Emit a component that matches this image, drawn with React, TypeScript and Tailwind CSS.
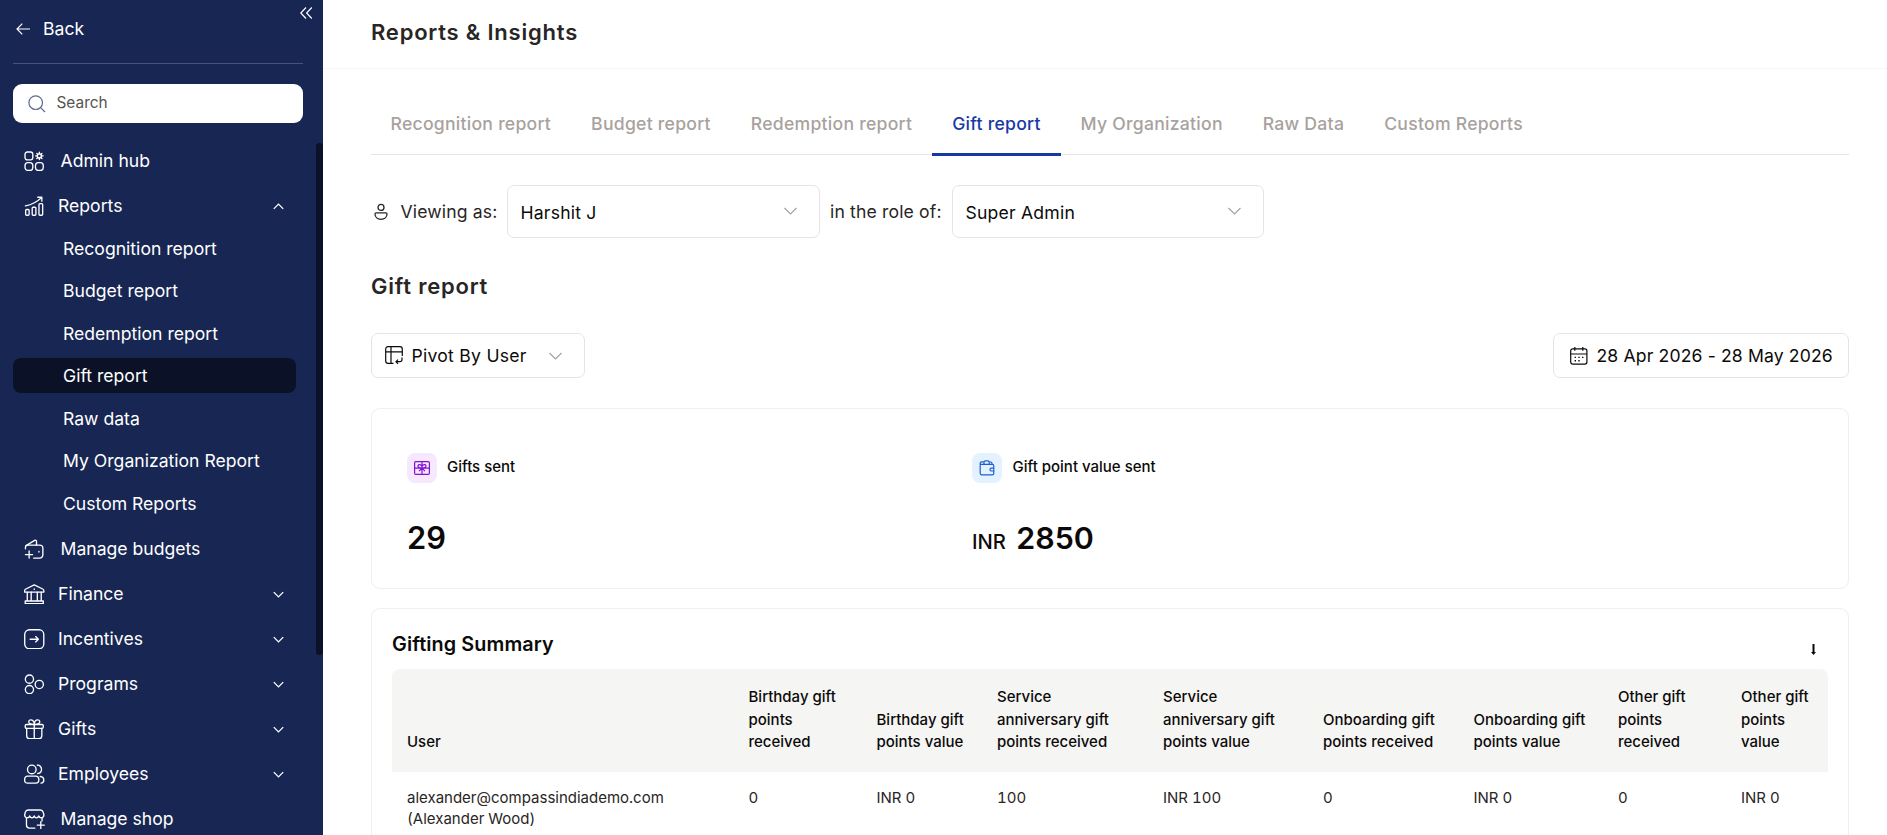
import type { ReactNode } from 'react'

type IconName =
  | 'hub'
  | 'reports'
  | 'budgets'
  | 'finance'
  | 'incentives'
  | 'programs'
  | 'gifts'
  | 'employees'
  | 'shop'

const ICONS: Record<IconName, ReactNode> = {
  hub: (
    <>
      <rect x="1" y="1" width="7.6" height="7.6" rx="2.2" />
      <rect x="1" y="11.4" width="7.6" height="7.6" rx="2.8" />
      <rect x="11.2" y="11.4" width="7.6" height="7.6" rx="2.8" />
      <circle cx="15" cy="4.8" r="2" />
      <path d="M15 1.2v1.6M15 6.8v1.6M11.4 4.8H13M17 4.8h1.6M12.5 2.3l1.1 1.1M16.4 6.2l1.1 1.1M17.5 2.3l-1.1 1.1M13.6 6.2l-1.1 1.1" />
    </>
  ),
  reports: (
    <>
      <rect x="1.6" y="13.2" width="3.4" height="5.6" rx="1" />
      <rect x="8" y="11" width="3.6" height="7.8" rx="1" />
      <rect x="14.6" y="7.4" width="3.6" height="11.4" rx="1" />
      <path d="M1.4 9.6C7 8.6 12.6 6 17 1.6M13.4 1.2H17.4V5" />
    </>
  ),
  budgets: (
    <>
      <path d="M1.4 9.6V8.2c0-1.5.9-2.2 2.2-2.2h11.6c2 0 3.2 1 3.2 3v6.2c0 2.2-1.2 3.4-3.2 3.4H9.4" />
      <path d="M2 6.4 10.4 1.4c1-.5 1.8 0 1.8.9V6" />
      <path d="M5 11.6v7M1.4 15.2h7M14.6 12.2v.6" />
    </>
  ),
  finance: (
    <>
      <path d="M10 .9 18.2 4.9c1 .5 1.2 1 1.2 2v1H.6v-1c0-1 .2-1.5 1.2-2Z" />
      <path d="M3.2 8v8.5M7 8v8.5M13 8v8.5M16.8 8v8.5M1.2 16.6h17.6v2.6H1.2ZM10 4.8v.5" />
    </>
  ),
  incentives: (
    <>
      <rect x=".7" y=".7" width="18.6" height="18.6" rx="4.6" />
      <path d="M6 10h8M11.4 7.4 14 10l-2.6 2.6" />
    </>
  ),
  programs: (
    <>
      <circle cx="5.3" cy="5" r="4" />
      <circle cx="5.3" cy="15.2" r="4" />
      <circle cx="14.9" cy="10.2" r="4" />
    </>
  ),
  gifts: (
    <>
      <rect x="1.2" y="5.4" width="17.6" height="3.7" rx="1.2" />
      <path d="M2.6 9.1v7.1c0 2 1 3.1 3 3.1h8.8c2 0 3-1.1 3-3.1V9.1M10 5.4v13.9" />
      <path d="M10 5.4C7.8 5.4 4.6 4.8 4.6 2.7 4.6 1.4 5.8.7 7 .9 9 1.3 10 3.2 10 5.4ZM10 5.4c2.2 0 5.4-.6 5.4-2.7C15.4 1.4 14.2.7 13 .9 11 1.3 10 3.2 10 5.4Z" />
    </>
  ),
  employees: (
    <>
      <circle cx="7.6" cy="5.3" r="4.2" />
      <path d="M3.6 11.8h7.6c2 0 3.3 1.6 3.3 3.6 0 2.2-1 3.3-3 3.3H3.5c-1.9 0-2.9-1-2.9-3 0-2.2 1.2-3.9 3-3.9Z" />
      <path d="M13 1.2c2.2-.3 4.1 1.6 4.1 3.9s-1.6 4-3.7 4.2M15.8 12.2c2.2.2 3.5 1.6 3.5 3.5 0 1.8-1 3-2.7 3" />
    </>
  ),
  shop: (
    <>
      <path d="M2.4 9.2v6.5c0 2 1 3 3 3h5.2M17.6 9.2v2.4M16.4 12.4v6.8M13 15.8h6.8" />
      <path d="M4 1h12c1.7 0 2.3.7 2.7 2l.6 2.4c.3 1.8-.9 3.2-2.5 3.2-1.2 0-2-.7-2.4-1.8-.4 1.1-1.2 1.8-2.3 1.8-1 0-1.8-.7-2.1-1.8-.4 1.1-1.2 1.8-2.2 1.8-1.1 0-1.9-.7-2.2-1.8-.4 1.1-1.3 1.8-2.4 1.8C1.6 8.6.4 7.2.7 5.4L1.3 3c.4-1.3 1-2 2.7-2Z" />
    </>
  ),
}

const REPORT_LINKS = [
  'Recognition report',
  'Budget report',
  'Redemption report',
  'Gift report',
  'Raw data',
  'My Organization Report',
  'Custom Reports',
]

const MENU: { label: string; icon: IconName; expandable: boolean }[] = [
  { label: 'Manage budgets', icon: 'budgets', expandable: false },
  { label: 'Finance', icon: 'finance', expandable: true },
  { label: 'Incentives', icon: 'incentives', expandable: true },
  { label: 'Programs', icon: 'programs', expandable: true },
  { label: 'Gifts', icon: 'gifts', expandable: true },
  { label: 'Employees', icon: 'employees', expandable: true },
  { label: 'Manage shop', icon: 'shop', expandable: false },
]

const TABS = [
  'Recognition report',
  'Budget report',
  'Redemption report',
  'Gift report',
  'My Organization',
  'Raw Data',
  'Custom Reports',
]

const COLUMNS: { lines: string[]; value: string; width: string }[] = [
  { lines: ['Birthday gift', 'points', 'received'], value: '0', width: 'w-[128px]' },
  { lines: ['Birthday gift', 'points value'], value: 'INR 0', width: 'w-[120.5px]' },
  { lines: ['Service', 'anniversary gift', 'points received'], value: '100', width: 'w-[166px]' },
  { lines: ['Service', 'anniversary gift', 'points value'], value: 'INR 100', width: 'w-[160px]' },
  { lines: ['Onboarding gift', 'points received'], value: '0', width: 'w-[150.5px]' },
  { lines: ['Onboarding gift', 'points value'], value: 'INR 0', width: 'w-[144.5px]' },
  { lines: ['Other gift', 'points', 'received'], value: '0', width: 'w-[123px]' },
  { lines: ['Other gift', 'points', 'value'], value: 'INR 0', width: 'w-[102px]' },
]

function Chevron({ up, className }: { up?: boolean; className?: string }) {
  return (
    <svg viewBox="0 0 14 8" fill="none" stroke="currentColor" className={className}>
      <path d={up ? 'M1 7l6-6 6 6' : 'M1 1l6 6 6-6'} />
    </svg>
  )
}

function MenuRow({ label, icon, expandable, open }: { label: string; icon: IconName; expandable?: boolean; open?: boolean }) {
  return (
    <div className="flex h-[45px] shrink-0 items-center pl-6 pr-[39px]">
      <svg viewBox="0 0 20 20" fill="none" stroke="currentColor" strokeWidth="1.3" strokeLinecap="round" strokeLinejoin="round" className="mb-px size-[20.5px]">
        {ICONS[icon]}
      </svg>
      <span className={expandable ? 'ml-[13.5px] flex-1' : 'ml-4 flex-1'}>{label}</span>
      {expandable && <Chevron up={open} className="mb-px h-[7px] w-[11px] stroke-[1.7]" />}
    </div>
  )
}

function Sidebar() {
  return (
    <aside className="relative flex w-[323px] shrink-0 flex-col overflow-hidden bg-[#182653] text-[17.6px] text-white">
      <svg viewBox="0 0 12 12" fill="none" stroke="currentColor" strokeWidth="1.2" className="absolute left-[300px] top-[7px] size-3">
        <path d="M6 .5.8 6 6 11.5M11.8.5 6.6 6l5.2 5.5" />
      </svg>
      <div className="ml-[13px] flex h-[64px] w-[290px] shrink-0 items-start border-b border-[#475277] pl-[3px] pt-[15px]">
        <svg viewBox="0 0 14 12" fill="none" stroke="currentColor" strokeWidth="1.2" className="mt-2 h-3 w-[14px]">
          <path d="M6.3.7 1 6l5.3 5.3M1 6h13" />
        </svg>
        <span className="ml-[13px] leading-7">Back</span>
      </div>
      <div className="ml-[13px] mt-5 flex h-[39px] w-[290px] shrink-0 items-center rounded-[9px] bg-white pl-[15px]">
        <svg viewBox="0 0 18 18" fill="none" stroke="#5d6a92" strokeWidth="1.2" className="size-[18px]">
          <circle cx="7.7" cy="7.7" r="6.8" />
          <path d="m12.6 12.6 4.4 4.4" />
        </svg>
        <span className="mb-px ml-[10.5px] text-[15.4px] text-[#57534e]">Search</span>
      </div>
      <nav className="mt-4 flex flex-col">
        <MenuRow label="Admin hub" icon="hub" />
        <MenuRow label="Reports" icon="reports" expandable open />
        <div className="flex flex-col gap-[7.5px] pb-[6.5px] pl-[13px] pt-[1.5px]">
          {REPORT_LINKS.map((label) => (
            <a
              key={label}
              className={
                label === 'Gift report'
                  ? 'flex h-[35px] w-[283px] items-center rounded-lg bg-[#0b1228] pl-[50px] pt-[1.5px]'
                  : 'flex h-[35px] w-[283px] items-center pl-[50px] pt-[1.5px]'
              }
            >
              {label}
            </a>
          ))}
        </div>
        {MENU.map((item) => (
          <MenuRow key={item.label} {...item} />
        ))}
      </nav>
      {/* Scrollbar thumb */}
      <div className="absolute right-0 top-[143px] h-[512px] w-[7px] rounded bg-[#0b1228]" />
    </aside>
  )
}

function SelectBox({ value, width }: { value: string; width: string }) {
  return (
    <div className={`${width} flex h-[53px] items-center justify-between rounded-[7px] border border-[#e7e5e4] pl-[12.5px] pr-[21.5px] text-[#0c0a09]`}>
      <span className="pt-[3px] tracking-[0.2px]">{value}</span>
      <Chevron className="mb-[2px] h-2 w-[15px] text-[#a8a29e] stroke-[1.2]" />
    </div>
  )
}

function ViewingAs() {
  return (
    <div className="mt-[30px] flex h-[53px] items-center text-[17.6px] text-[#292524]">
      <svg viewBox="0 0 14 18" fill="none" stroke="currentColor" strokeWidth="1.3" className="ml-[3px] h-[18px] w-[14px]">
        <circle cx="7" cy="4.4" r="3" />
        <path d="M2.2 9.8h9.6c.8 0 1.2.5 1.2 1.2 0 3-2.4 5.3-6 5.3s-6-2.3-6-5.3c0-.7.4-1.2 1.2-1.2Z" />
      </svg>
      <span className="ml-[12.5px] w-[106.5px] pt-px tracking-[0.15px]">Viewing as:</span>
      <SelectBox value="Harshit J" width="w-[313px]" />
      <span className="ml-[10px] w-[122px] pt-px tracking-[0.15px]">in the role of:</span>
      <SelectBox value="Super Admin" width="w-[312px]" />
    </div>
  )
}

function StatCards() {
  return (
    <section className="mt-[30px] flex h-[181px] rounded-[9px] border border-[#f0efee] pl-[35px] pt-[44px] text-[#0c0a09]">
      <div className="w-[565px]">
        <div className="flex items-center">
          <div className="flex size-[30px] items-center justify-center rounded-lg bg-[#f5e8ff]">
            <svg viewBox="0 0 16 14" fill="none" stroke="#8312d2" strokeWidth="1.2" className="h-[14px] w-4">
              <rect x=".6" y=".6" width="14.8" height="12.8" rx="1.2" />
              <path d="M.6 7.2h14.8M8 .6v12.8M8 7.2C6 7.2 4 6.5 4 4.9 4 3 7.6 3.2 8 5.6 8.4 3.2 12 3 12 4.9c0 1.6-2 2.3-4 2.3ZM8 7.2 5 10.2M8 7.2l3 3" />
            </svg>
          </div>
          <span className="mb-[2px] ml-[10px] text-[15px] font-medium">Gifts sent</span>
        </div>
        <div className="mt-[34px] text-[30.8px] font-semibold leading-[42px]">29</div>
      </div>
      <div>
        <div className="flex items-center">
          <div className="flex size-[30px] items-center justify-center rounded-lg bg-[#e4f2ff]">
            <svg viewBox="0 0 16 16" fill="none" stroke="#1d5fd0" strokeWidth="1.2" className="size-4">
              <path d="M1.2 4.4v8.8c0 1 .6 1.6 1.6 1.6h10.4c1 0 1.6-.6 1.6-1.6V6c0-1-.6-1.6-1.6-1.6ZM1.2 4.4V3c0-.8.6-1.2 1.4-1.2h2.2M14.8 8.2h-2.6c-.8 0-1.2.6-1.2 1.4s.4 1.4 1.2 1.4h2.6" />
              <path d="M5 4.4V2.2C5 1.4 5.6.8 6.4.8h2.4c.8 0 1.4.6 1.4 1.4v2.2M10.6 2h1.2c.8 0 1.2.6 1.2 1.4v1" />
            </svg>
          </div>
          <span className="mb-[2px] ml-[10.5px] text-[15px] font-medium">Gift point value sent</span>
        </div>
        <div className="mt-[34px] flex items-baseline gap-[10.5px] text-[30.4px] font-semibold leading-[42px]">
          <span className="text-[20.2px] font-medium">INR</span>
          <span>2850</span>
        </div>
      </div>
    </section>
  )
}

function SummaryTable() {
  return (
    <section className="mt-[19px] h-[260px] shrink-0 rounded-[9px] border border-[#f0efee] px-5">
      <div className="flex h-[60px] items-start justify-between pr-[12px] text-[#0c0a09]">
        <h3 className="pt-5 text-[19.8px] font-semibold leading-[30px] tracking-[0.1px]">Gifting Summary</h3>
        <svg viewBox="0 0 5 11" className="mt-[35px] h-[11px] w-[5px]" fill="currentColor">
          <path d="M1.5 0h2v8H5L2.5 11 0 8h1.5Z" />
        </svg>
      </div>
      <table className="w-[1436px] table-fixed border-separate border-spacing-0 text-left text-[15px] tabular-nums">
        <thead>
          <tr className="h-[103px] align-bottom leading-[22.4px] text-[#0c0a09]">
            <th className="w-[341.5px] rounded-tl-lg bg-[#f5f5f4] pb-[18.6px] pl-[15px] font-medium">User</th>
            {COLUMNS.map((col, i) => (
              <th key={i} className={`${col.width} bg-[#f5f5f4] pb-[18.6px] pl-[15px] font-medium whitespace-nowrap last:rounded-tr-lg`}>
                {col.lines.map((line) => (
                  <div key={line}>{line}</div>
                ))}
              </th>
            ))}
          </tr>
        </thead>
        <tbody>
          <tr className="align-top leading-[21px] text-[#292524]">
            <td className="pl-[15px] pt-[15px]">
              alexander@compassindiademo.com
              <br />
              (Alexander Wood)
            </td>
            {COLUMNS.map((col, i) => (
              <td key={i} className="pl-[15px] pt-[15px]">{col.value}</td>
            ))}
          </tr>
        </tbody>
      </table>
    </section>
  )
}

export default function App() {
  return (
    <div className="flex h-[835px] w-[1887px] overflow-hidden bg-white font-['Inter',sans-serif]">
      <Sidebar />
      <main className="flex-1">
        <header className="h-[69px] border-b border-[#f5f5f4] pl-12 pt-[17px]">
          <h1 className="text-[22px] font-semibold leading-[30px] tracking-[0.78px] text-[#292524]">Reports &amp; Insights</h1>
        </header>
        <div className="flex flex-col pl-12 pr-[38px]">
          <div className="mt-[26px] flex h-[60px] border-b border-[#e7e5e4]">
            {TABS.map((tab) => (
              <div
                key={tab}
                className={
                  tab === 'Gift report'
                    ? '-ml-px h-[61px] border-b-3 border-[#1739a6] pl-[20.5px] pr-[20.3px] pt-[15px] text-[17.6px] font-medium leading-[27px] tracking-[0.26px] text-[#1739a6]'
                    : 'h-[61px] pl-[19.5px] pr-[20.5px] pt-[15px] text-[17.6px] font-medium leading-[27px] tracking-[0.26px] text-[#a8a29e]'
                }
              >
                {tab}
              </div>
            ))}
          </div>
          <ViewingAs />
          <h2 className="mt-[33px] text-[22px] font-semibold leading-[30px] tracking-[0.78px] text-[#292524]">Gift report</h2>
          <div className="mt-[32px] flex h-[45px] justify-between text-[17.6px] text-[#0c0a09]">
            <div className="flex w-[214px] items-center rounded-[7px] border border-[#e7e5e4] pl-[13px]">
              <svg viewBox="0 0 18 19" fill="none" stroke="currentColor" strokeWidth="1.2" className="h-[19px] w-[18px]">
                <path d="M17.3 10V3c0-1.4-.9-2.3-2.3-2.3H3C1.6.7.7 1.6.7 3v12c0 1.4.9 2.3 2.3 2.3h5.5M.7 5.8h16.6M6 .7v16.6" />
                <path d="M17 11.5v2c0 1.4-.7 2.2-2.1 2.2h-3.6M13 13.6l-2 2.1 2 2.1" />
              </svg>
              <span className="ml-[8.5px] pt-px tracking-[0.25px]">Pivot By User</span>
              <Chevron className="ml-[21px] h-2 w-[15px] text-[#a8a29e] stroke-[1.2]" />
            </div>
            <div className="flex w-[296px] items-center rounded-[7px] border border-[#e7e5e4] pl-4">
              <svg viewBox="0 0 18 18" fill="none" stroke="currentColor" strokeWidth="1.2" className="size-[18px]">
                <rect x=".7" y="1.9" width="16.2" height="15.2" rx="2" />
                <path d="M.7 7h16.2M4.8 0v3.8M12.8 0v3.8" />
                <path d="M8.3 10.4h1.4M12 10.4h1.4M4.6 10.4H6M4.6 13.7H6M8.3 13.7h1.4" strokeWidth="1.4" />
              </svg>
              <span className="ml-[8.5px] pt-px tracking-[0.14px]">28 Apr 2026 - 28 May 2026</span>
            </div>
          </div>
          <StatCards />
          <SummaryTable />
        </div>
      </main>
    </div>
  )
}
